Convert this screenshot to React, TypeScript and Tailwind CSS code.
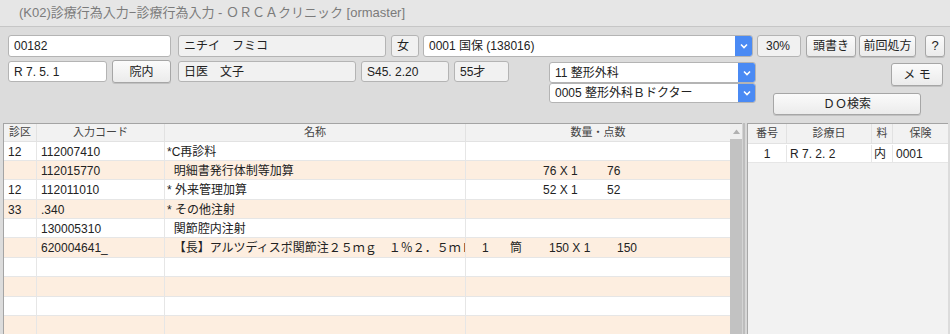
import React from 'react';

const FONT = '"Liberation Sans", "Noto Sans CJK JP", sans-serif';

// a plain text box, white when editable, gray when read-only
function Field({ w, text, ro = false, cls = '' }: { w: string; text: string; ro?: boolean; cls?: string }) {
  return (
    <div
      className={`${w} ${cls} h-full border border-[#b4b4b4] rounded-[3px] pl-[5px] flex items-center text-[12px] text-[#222] whitespace-pre overflow-hidden ${
        ro ? 'bg-[#f1f1f1]' : 'bg-white'
      }`}
    >
      {text}
    </div>
  );
}

function Btn({ w, text, cls = '' }: { w: string; text: string; cls?: string }) {
  return (
    <div
      className={`${w} ${cls} border border-[#a6a6a6] rounded-[3px] bg-gradient-to-b from-[#fbfbfb] to-[#ebebeb] shadow-[0_1px_0_rgba(0,0,0,0.12)] flex items-center justify-center text-[12px] text-[#222] whitespace-pre`}
    >
      {text}
    </div>
  );
}

function Select({ w, h, text }: { w: string; h: string; text: string }) {
  return (
    <div className={`${w} ${h} flex border border-[#b4b4b4] rounded-[3px] bg-white overflow-hidden`}>
      <div className="flex-1 pl-[5px] flex items-center text-[12px] text-[#222] whitespace-pre">{text}</div>
      <div className="w-[17px] bg-[#4a8af4] flex items-center justify-center">
        <svg width="8" height="6" viewBox="0 0 8 6">
          <path d="M1 1.5 L4 4.5 L7 1.5" fill="none" stroke="#fff" strokeWidth="1.6" />
        </svg>
      </div>
    </div>
  );
}

type Row = { ku: string; code: string; name: React.ReactNode; qty: React.ReactNode };

// quantity column is laid out like fixed tab stops
const Q = ({ parts }: { parts: [string, string][] }) => (
  <div className="relative h-full">
    {parts.map(([left, t], i) => (
      <span key={i} className="absolute top-[1px] leading-[19px] whitespace-pre" style={{ left }}>
        {t}
      </span>
    ))}
  </div>
);

const rows: Row[] = [
  { ku: '12', code: '112007410', name: '*C再診料', qty: null },
  { ku: '', code: '112015770', name: '  明細書発行体制等加算', qty: <Q parts={[['77px', '76 X 1'], ['141px', '76']]} /> },
  { ku: '12', code: '112011010', name: '* 外来管理加算', qty: <Q parts={[['77px', '52 X 1'], ['141px', '52']]} /> },
  { ku: '33', code: '.340', name: '* その他注射', qty: null },
  { ku: '', code: '130005310', name: '  関節腔内注射', qty: null },
  {
    ku: '',
    code: '620004641_',
    name: '  【長】アルツディスポ関節注２５ｍｇ　１％２．５ｍＬ',
    qty: <Q parts={[['16px', '1'], ['44px', '筒'], ['83px', '150 X 1'], ['151px', '150']]} />,
  },
  { ku: '', code: '', name: '', qty: null },
  { ku: '', code: '', name: '', qty: null },
  { ku: '', code: '', name: '', qty: null },
  { ku: '', code: '', name: '', qty: null },
];

export default function App() {
  return (
    <div className="w-[950px] h-[334px] overflow-hidden bg-[#dcdcdc]" style={{ fontFamily: FONT }}>
      {/* title bar */}
      <div className="h-[27px] bg-[#e6e6e6] border-b border-[#c6c6c6] pl-[19px] flex items-center text-[13px] text-[#7b7b7b] whitespace-pre">
        (K02)診療行為入力−診療行為入力 - ＯＲＣＡクリニック [ormaster]
      </div>

      {/* patient header, row 1 */}
      <div className="flex h-[22px] mt-[8px] pl-[8px]">
        <Field w="w-[163px]" text="00182" />
        <Field w="w-[208px]" cls="ml-[7px]" text="ニチイ　フミコ" ro />
        <Field w="w-[28px]" cls="ml-[5px]" text="女" ro />
        <Select w="w-[330px] ml-[4px]" h="h-[22px]" text="0001 国保 (138016)" />
        <Field w="w-[44px]" cls="ml-[4px] pl-[8px]" text="30%" ro />
        <Btn w="w-[50px] h-[22px]" cls="ml-[5px]" text="頭書き" />
        <Btn w="w-[57px] h-[22px]" cls="ml-[3px]" text="前回処方" />
        <Btn w="w-[20px] h-[22px]" cls="ml-[9px] text-[13px]" text="?" />
      </div>

      {/* rows 2 and 3 */}
      <div className="flex pl-[8px] mt-[3px] h-[58px]">
        <div className="flex items-start h-[23px]">
          <div className="h-[21px] mt-[1px] flex">
            <Field w="w-[99px]" text="R 7. 5. 1" />
          </div>
          <Btn w="w-[59px] h-[23px]" cls="ml-[5px]" text="院内" />
          <div className="h-[21px] mt-[1px] flex ml-[7px]">
            <Field w="w-[178px]" text="日医　文子" ro />
            <Field w="w-[88px]" cls="ml-[5px]" text="S45. 2.20" ro />
            <Field w="w-[55px]" cls="ml-[5px]" text="55才" ro />
          </div>
        </div>
        <div className="ml-[40px] mt-[2px] flex flex-col">
          <Select w="w-[207px]" h="h-[21px]" text="11 整形外科" />
          <Select w="w-[207px]" h="h-[20px]" text="0005 整形外科Ｂドクター" />
        </div>
        <div className="flex-1 flex flex-col pr-[7px]">
          <Btn w="w-[52px] h-[23px]" cls="ml-auto mt-[3px]" text="メ モ" />
          <Btn w="w-[148px] h-[22px]" cls="ml-[17px] mt-[7px]" text="ＤＯ検索" />
        </div>
      </div>

      {/* tables */}
      <div className="flex mt-[5px] h-[211px]">
        {/* main table */}
        <div className="ml-[3px] w-[739px] flex border-l border-t border-[#a4a4a4] bg-white">
          <div className="flex-1 flex flex-col text-[12px] text-[#222]">
            <div className="flex h-[20px] bg-[#f2f2f2] border-b border-[#e2e2e2] text-[11px] text-[#444]">
              <div className="w-[33px] flex items-center justify-center border-r border-[#e2e2e2]">診区</div>
              <div className="w-[128px] flex items-center justify-center border-r border-[#e2e2e2]">入力コード</div>
              <div className="w-[301px] flex items-center justify-center border-r border-[#e2e2e2]">名称</div>
              <div className="flex-1 flex items-center justify-center">数量・点数</div>
            </div>
            {rows.map((r, i) => (
              <div
                key={i}
                className={`flex h-[19.4px] shrink-0 border-b border-[#e6e6e6] ${i % 2 ? 'bg-[#fdeee0]' : 'bg-white'}`}
              >
                <div className="w-[33px] pl-[4px] pt-[1px] leading-[18px] border-r border-[#e6e6e6]">{r.ku}</div>
                <div className="w-[128px] pl-[4px] pt-[1px] leading-[18px] border-r border-[#e6e6e6]">{r.code}</div>
                <div className="w-[301px] pl-[2px] pt-[1px] leading-[18px] border-r border-[#e6e6e6] whitespace-pre overflow-hidden">
                  {r.name}
                </div>
                <div className="flex-1">{r.qty}</div>
              </div>
            ))}
          </div>
          {/* scrollbar */}
          <div className="w-[12px] flex flex-col bg-[#e4e4e4]">
            <div className="h-[15px] bg-[#efefef] flex items-center justify-center">
              <svg width="7" height="5" viewBox="0 0 7 5">
                <path d="M0 5 L3.5 0.5 L7 5 Z" fill="#b0b0b0" />
              </svg>
            </div>
            <div className="flex-1 bg-[#c2c2c2]" />
          </div>
        </div>

        {/* splitter */}
        <div className="w-[6px] flex">
          <div className="w-[1px] bg-[#d4d4d4]" />
          <div className="w-[2px] bg-[#bdbdbd]" />
          <div className="w-[2px] bg-[#d8d8d8]" />
          <div className="w-[1px] bg-[#a8a8a8]" />
        </div>

        {/* history panel */}
        <div className="w-[200px] bg-[#f2f2f2] border-t border-[#a4a4a4] flex flex-col text-[12px] text-[#222]">
          <div className="flex h-[20px] text-[11px] text-[#444] border-b border-[#e2e2e2]">
            <div className="w-[39px] flex items-center justify-center border-r border-[#e2e2e2]">番号</div>
            <div className="w-[85px] flex items-center justify-center border-r border-[#e2e2e2]">診療日</div>
            <div className="w-[21px] flex items-center justify-center border-r border-[#e2e2e2]">料</div>
            <div className="flex-1 flex items-center justify-center">保険</div>
          </div>
          <div className="flex h-[19.4px] bg-white border-b border-[#e6e6e6] pt-[1px] leading-[18px]">
            <div className="w-[39px] text-center border-r border-[#e6e6e6]">1</div>
            <div className="w-[85px] pl-[3px] border-r border-[#e6e6e6] whitespace-pre">R 7. 2. 2</div>
            <div className="w-[21px] pl-[2px] border-r border-[#e6e6e6]">内</div>
            <div className="flex-1 pl-[3px]">0001</div>
          </div>
        </div>
      </div>
    </div>
  );
}
